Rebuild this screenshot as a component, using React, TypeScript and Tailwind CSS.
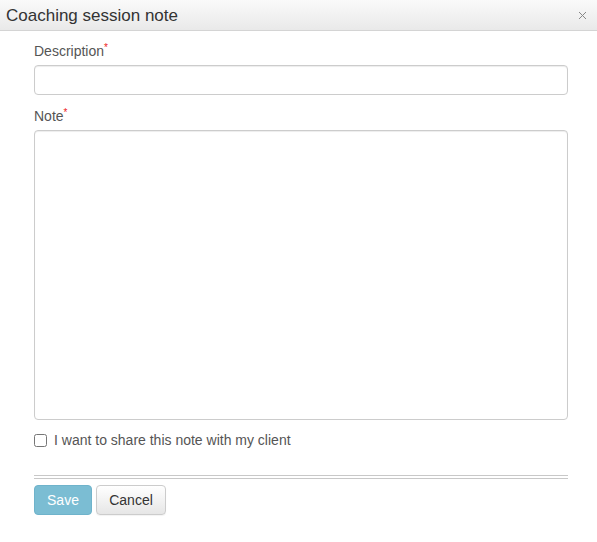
import { useState } from 'react';

const App = () => {
    const [description, setDescription] = useState('');
    const [note, setNote] = useState('');
    const [share, setShare] = useState(false);

    return (
        <div className="h-[542px] w-[597px] bg-white font-['Liberation_Sans',Arial,sans-serif] text-[14px] text-[#555]">
            {/* Title bar */}
            <div className="flex h-[31px] items-center justify-between border-b border-[#d4d4d4] bg-gradient-to-b from-[#fafafa] to-[#e9e9e9] pl-[6px] pr-[10px]">
                <h1 className="text-[17px] leading-none text-[#333]">Coaching session note</h1>
                <svg width="9" height="9" viewBox="0 0 9 9" className="text-[#888]">
                    <path d="M1 1L8 8M8 1L1 8" stroke="currentColor" strokeWidth="1" />
                </svg>
            </div>

            {/* Form */}
            <div className="px-[34px] pr-[29px]">
                <label className="mt-[10px] block leading-[20px]">
                    Description<span className="relative -top-[5px] text-[10px] text-[#e22]">*</span>
                </label>
                <input
                    value={description}
                    onChange={(e) => setDescription(e.target.value)}
                    className="mt-[2px] block h-[30px] w-full rounded-[4px] border border-[#ccc] px-2 shadow-[inset_0_1px_1px_rgba(0,0,0,0.075)] outline-none"
                />

                <label className="mt-[11px] block leading-[20px]">
                    Note<span className="relative -top-[5px] text-[10px] text-[#e22]">*</span>
                </label>
                <textarea
                    value={note}
                    onChange={(e) => setNote(e.target.value)}
                    className="mt-[2px] block h-[290px] w-full resize-none rounded-[4px] border border-[#ccc] p-2 shadow-[inset_0_1px_1px_rgba(0,0,0,0.075)] outline-none"
                />

                <label className="mt-[12px] flex items-center gap-[7px] leading-[16px]">
                    <input
                        type="checkbox"
                        checked={share}
                        onChange={(e) => setShare(e.target.checked)}
                        className="m-0 h-[13px] w-[13px]"
                    />
                    I want to share this note with my client
                </label>

                {/* Divider */}
                <div className="mt-[27px] h-[4px] border-y border-[#c8c8c8]" />

                {/* Buttons */}
                <div className="mt-[6px] flex gap-[4px]">
                    <button className="h-[30px] w-[58px] rounded-[4px] border border-[#6fb3cb] bg-[#7bbdd3] text-[14px] text-white">
                        Save
                    </button>
                    <button className="h-[30px] w-[70px] rounded-[4px] border border-[#ccc] bg-gradient-to-b from-white to-[#e6e6e6] text-[14px] text-[#333] shadow-[0_1px_1px_rgba(0,0,0,0.05)]">
                        Cancel
                    </button>
                </div>
            </div>
        </div>
    );
};

export default App;
